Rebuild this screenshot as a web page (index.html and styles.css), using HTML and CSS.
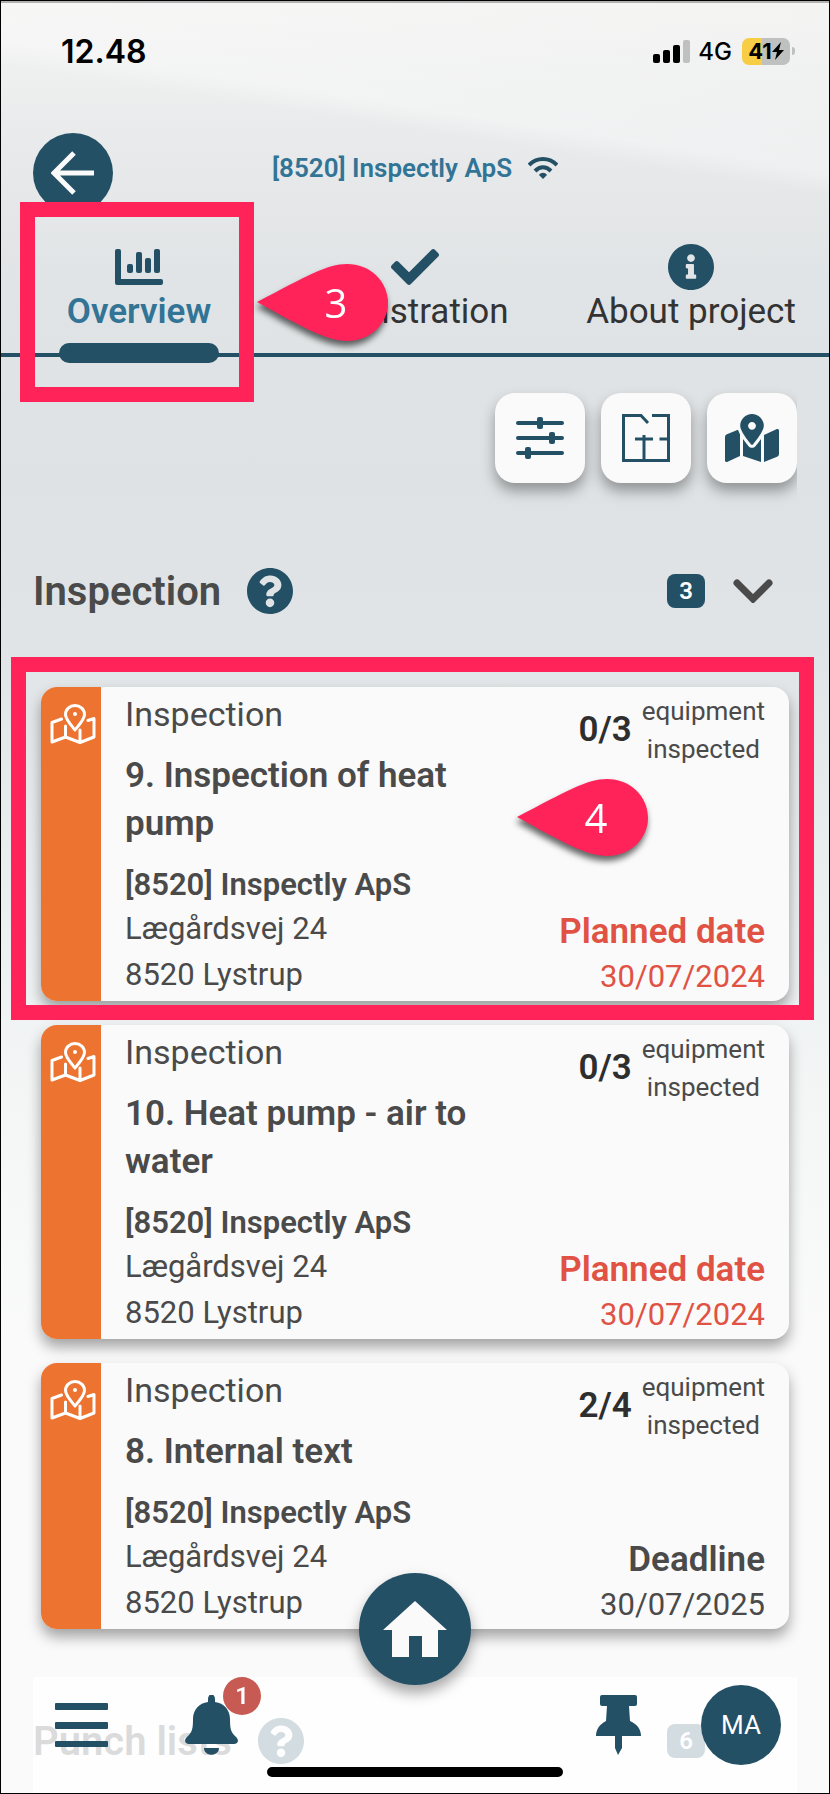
FILE: index.html
```
<!DOCTYPE html>
<html lang="en">
<head>
    <meta charset="UTF-8">
    <meta name="viewport" content="width=device-width, initial-scale=1.0">
    <title>Inspectly - Overview</title>
    <link rel="stylesheet" href="styles.css">
</head>
<body>
    <!-- Shared icons -->
    <svg class="sprite" width="0" height="0" aria-hidden="true">
        <symbol id="icon-help" viewBox="8 8 496 496">
            <path d="M504 256c0 136.997-111.043 248-248 248S8 392.997 8 256C8 119.083 119.043 8 256 8s248 111.083 248 248zM262.655 90c-54.497 0-89.255 22.957-116.549 63.758-3.536 5.286-2.353 12.415 2.715 16.258l34.699 26.31c5.205 3.947 12.621 3.008 16.665-2.122 17.864-22.658 30.113-35.797 57.303-35.797 20.429 0 45.698 13.148 45.698 32.958 0 14.976-12.363 22.667-32.534 33.976C247.128 238.528 216 254.941 216 296v4c0 6.627 5.373 12 12 12h56c6.627 0 12-5.373 12-12v-1.333c0-28.462 83.186-29.647 83.186-106.667 0-58.002-60.165-102-116.531-102zM256 338c-25.365 0-46 20.635-46 46 0 25.364 20.635 46 46 46s46-20.636 46-46c0-25.365-20.635-46-46-46z"/>
        </symbol>
        <symbol id="icon-map-outline" viewBox="0 0 46 40">
            <g fill="none" stroke="currentColor" stroke-width="3" stroke-linejoin="round" stroke-linecap="round">
                <path d="M25 26C20 20 15.500 15 15.500 10.500a9.500 9 0 0 1 19 0C34.500 15 30 20 25 26z"/>
                <path d="M11.500 15L2 18.500V38l13.500-5 14.500 5.500 14-5.500V14.500l-6 2M15.500 22v11M30 26v12"/>
            </g>
            <circle cx="25" cy="10" r="2" fill="currentColor"/>
        </symbol>
        <symbol id="icon-drop" viewBox="0 0 132 78">
            <path d="M0 38C50 12 70 0 90 0c23 0 41 17 41 39 0 21-18 38-41 38C70 77 45 63 0 38z"/>
        </symbol>
    </svg>

    <div class="status-bar">
        <span class="time">12.48</span>
        <div class="status-icons">
            <svg width="37" height="23" viewBox="0 0 37 23">
                <rect x="0" y="14" width="7" height="9" rx="2"/>
                <rect x="10" y="10" width="7" height="13" rx="2"/>
                <rect x="20" y="5" width="7" height="18" rx="2"/>
                <rect x="30" y="0" width="7" height="23" rx="2" fill="#bfc0c0"/>
            </svg>
            <span class="network">4G</span>
            <span class="battery">41<svg width="12" height="18" viewBox="0 0 12 18"><path d="M9 0L0 10h5L3 18l9-10H7z"/></svg></span>
        </div>
    </div>

    <header class="header">
        <button class="back-button" aria-label="Back">
            <svg width="44" height="44" viewBox="0 0 44 44" fill="none" stroke="#fafafa" stroke-width="5">
                <path d="M43 22H3M23 2L3 22l20 20"/>
            </svg>
        </button>
        <div class="project">
            <h1>[8520] Inspectly ApS</h1>
            <svg width="30" height="22" viewBox="0 0 30 22" fill="none" stroke="#245066" stroke-width="4">
                <path d="M1 8C9 0 21 0 29 8M7 14c5-5 11-5 16 0"/>
                <path d="M15 22l-4-4c2-3 6-3 8 0z" fill="#245066" stroke="none"/>
            </svg>
        </div>
    </header>

    <nav class="tabs">
        <button class="tab active">
            <svg width="48" height="36" viewBox="0 0 48 36">
                <path d="M0 2a2 2 0 0 1 2-2h2a2 2 0 0 1 2 2v28h40a2 2 0 0 1 2 2v2a2 2 0 0 1-2 2H2a2 2 0 0 1-2-2z"/>
                <rect x="12" y="15" width="6" height="9" rx="2"/>
                <rect x="21" y="3" width="6" height="21" rx="2"/>
                <rect x="30" y="9" width="6" height="15" rx="2"/>
                <rect x="39" y="0" width="6" height="24" rx="2"/>
            </svg>
            <span>Overview</span>
        </button>
        <button class="tab">
            <svg width="48" height="48" viewBox="0 0 512 512"><path d="M173.898 439.404l-166.400-166.400c-9.997-9.997-9.997-26.206 0-36.204l36.203-36.204c9.997-9.998 26.207-9.998 36.204 0L192 312.690 432.095 72.596c9.997-9.997 26.207-9.997 36.204 0l36.203 36.204c9.997 9.997 9.997 26.206 0 36.204l-294.400 294.401c-9.998 9.997-26.207 9.997-36.204-.001z"/></svg>
            <span>Registration</span>
        </button>
        <button class="tab">
            <svg width="46" height="46" viewBox="8 8 496 496"><path d="M256 8C119.043 8 8 119.083 8 256c0 136.997 111.043 248 248 248s248-111.003 248-248C504 119.083 392.957 8 256 8zm0 110c23.196 0 42 18.804 42 42s-18.804 42-42 42-42-18.804-42-42 18.804-42 42-42zm56 254c0 6.627-5.373 12-12 12h-88c-6.627 0-12-5.373-12-12v-24c0-6.627 5.373-12 12-12h12v-64h-12c-6.627 0-12-5.373-12-12v-24c0-6.627 5.373-12 12-12h64c6.627 0 12 5.373 12 12v100h12c6.627 0 12 5.373 12 12v24z"/></svg>
            <span>About project</span>
        </button>
        <div class="highlight highlight-tab"></div>
        <div class="callout callout-tab">
            <svg width="132" height="78"><use href="#icon-drop"/></svg>
            <span>3</span>
        </div>
    </nav>

    <main>
        <div class="toolbar">
            <button aria-label="Filter">
                <svg width="48" height="42" viewBox="0 0 48 42">
                    <rect x="0" y="4" width="48" height="4" rx="2"/>
                    <rect x="0" y="19" width="48" height="4" rx="2"/>
                    <rect x="0" y="34" width="48" height="4" rx="2"/>
                    <rect x="21" y="0" width="6" height="12" rx="2"/>
                    <rect x="33" y="15" width="6" height="12" rx="2"/>
                    <rect x="9" y="30" width="6" height="12" rx="2"/>
                </svg>
            </button>
            <button aria-label="Floor plan">
                <svg width="48" height="48" viewBox="0 0 48 48" fill="none" stroke="#245066" stroke-width="3">
                    <path d="M26 9l-7-7.500H1.500v45h45v-45H30M13 25h18M37.500 25H47M22 21v26"/>
                </svg>
            </button>
            <button aria-label="Map">
                <svg width="54" height="48" viewBox="0 0 576 512"><path d="M288 0c-69.590 0-126 56.410-126 126 0 56.260 82.350 158.800 113.900 196.020 6.390 7.540 17.820 7.540 24.200 0C331.650 284.800 414 182.260 414 126 414 56.410 357.590 0 288 0zm0 168c-23.200 0-42-18.800-42-42s18.800-42 42-42 42 18.800 42 42-18.800 42-42 42zM20.120 215.950A32.006 32.006 0 0 0 0 245.660v250.320c0 11.320 11.430 19.060 21.940 14.860L160 448V214.920c-8.840-15.980-16.070-31.540-21.250-46.420L20.120 215.950zM288 359.670c-14.070 0-27.380-6.180-36.510-16.960-19.660-23.200-40.570-49.620-59.490-76.720v182l192 64V266c-18.920 27.090-39.820 53.520-59.490 76.720-9.130 10.770-22.440 16.950-36.510 16.950zm266.060-198.510L416 224v288l139.880-55.950A31.996 31.996 0 0 0 576 426.340V176.020c0-11.320-11.430-19.060-21.940-14.860z"/></svg>
            </button>
        </div>

        <section>
            <div class="section-header">
                <h2>Inspection</h2>
                <button class="help" aria-label="Help"><svg width="46" height="46"><use href="#icon-help"/></svg></button>
                <span class="count">3</span>
                <button class="toggle" aria-label="Collapse">
                    <svg width="40" height="24" viewBox="0 0 40 24" fill="none" stroke="#4a4a4a" stroke-width="7" stroke-linecap="round"><path d="M4 4l16 16L36 4"/></svg>
                </button>
            </div>

            <div class="cards">
                <article class="card late">
                    <div class="card-type"><svg width="46" height="40"><use href="#icon-map-outline"/></svg></div>
                    <div class="card-info">
                        <p class="kind">Inspection</p>
                        <h3>9. Inspection of heat pump</h3>
                        <p class="company">[8520] Inspectly ApS</p>
                        <p class="address">Lægårdsvej 24<br>8520 Lystrup</p>
                    </div>
                    <div class="card-status">
                        <div class="progress"><strong>0/3</strong><span>equipment<br>inspected</span></div>
                        <div class="due"><strong>Planned date</strong><span>30/07/2024</span></div>
                    </div>
                    <div class="highlight highlight-card"></div>
                    <div class="callout callout-card">
                        <svg width="132" height="78"><use href="#icon-drop"/></svg>
                        <span>4</span>
                    </div>
                </article>

                <article class="card late">
                    <div class="card-type"><svg width="46" height="40"><use href="#icon-map-outline"/></svg></div>
                    <div class="card-info">
                        <p class="kind">Inspection</p>
                        <h3>10. Heat pump - air to water</h3>
                        <p class="company">[8520] Inspectly ApS</p>
                        <p class="address">Lægårdsvej 24<br>8520 Lystrup</p>
                    </div>
                    <div class="card-status">
                        <div class="progress"><strong>0/3</strong><span>equipment<br>inspected</span></div>
                        <div class="due"><strong>Planned date</strong><span>30/07/2024</span></div>
                    </div>
                </article>

                <article class="card">
                    <div class="card-type"><svg width="46" height="40"><use href="#icon-map-outline"/></svg></div>
                    <div class="card-info">
                        <p class="kind">Inspection</p>
                        <h3>8. Internal text</h3>
                        <p class="company">[8520] Inspectly ApS</p>
                        <p class="address">Lægårdsvej 24<br>8520 Lystrup</p>
                    </div>
                    <div class="card-status">
                        <div class="progress"><strong>2/4</strong><span>equipment<br>inspected</span></div>
                        <div class="due"><strong>Deadline</strong><span>30/07/2025</span></div>
                    </div>
                </article>
            </div>
        </section>

        <section>
            <div class="section-header">
                <h2>Punch lists</h2>
                <button class="help" aria-label="Help"><svg width="46" height="46"><use href="#icon-help"/></svg></button>
                <span class="count">6</span>
                <span class="toggle"></span>
            </div>
        </section>
    </main>

    <nav class="bottom-bar">
        <div class="bar-group left">
            <button aria-label="Menu">
                <svg width="54" height="44" viewBox="0 0 54 44">
                    <rect width="53" height="7" rx="1"/>
                    <rect y="19" width="53" height="7" rx="1"/>
                    <rect y="38" width="53" height="6" rx="1"/>
                </svg>
            </button>
            <button class="notifications" aria-label="Notifications">
                <svg width="54" height="60" viewBox="0 0 54 60">
                    <path d="M23 7V4a3 4 0 0 1 7 0v3c9 1 15 8 15 17 0 10 1 13 5 17 5 4 3 8-1 8H4c-4 0-6-4-1-8 4-4 5-7 5-17C8 15 14 8 23 7zM19 53h15c0 9-15 9-15 0z"/>
                </svg>
                <span class="alert">1</span>
            </button>
        </div>
        <button class="home" aria-label="Home">
            <svg width="64" height="56" viewBox="0 0 64 56"><path d="M32 0l32 29h-9v27H39V35H26v21H9V29H0z"/></svg>
        </button>
        <div class="bar-group right">
            <button aria-label="Pinned">
                <svg width="45" height="60" viewBox="0 0 45 60">
                    <path d="M6 0h33a2 2 0 0 1 2 2v7a2 2 0 0 1-2 2h-6l1 15c7 3 11 8 11 15H26v12l-4 7-3-7V41H0c0-7 4-12 10-15l1-15H6a2 2 0 0 1-2-2V2a2 2 0 0 1 2-2z"/>
                </svg>
            </button>
            <button class="avatar">MA</button>
        </div>
        <div class="home-indicator"></div>
    </nav>
</body>
</html>
```
FILE: styles.css
```
/* Global styles */
* {
    box-sizing: border-box;
}

body {
    margin: 0;
    min-height: 100vh;
    border: 1px solid #000;
    font-family: Roboto, sans-serif;
    color: #4a4a4a;
    background:
        linear-gradient(189deg, rgba(255, 255, 255, 0), rgba(255, 255, 255, 0.35) 44%, rgba(255, 255, 255, 0) 50%) 0 0 / 100% 260px no-repeat,
        linear-gradient(#f4f4f3 0, #e7e9ea 160px, #e1e4e6 280px, #dee2e4 480px, #e0e4e6 640px, #e9edee 850px, #f4f6f6 1100px, #fafafa 1340px);
}

h1, h2, h3, p {
    margin: 0;
}

button {
    padding: 0;
    border: none;
    background: none;
    font: inherit;
    color: inherit;
    cursor: pointer;
}

svg {
    display: block;
}

.sprite {
    position: absolute;
}

/* Phone status bar */
.status-bar {
    display: flex;
    justify-content: space-between;
    align-items: center;
    height: 98px;
    padding: 0 34px 0 60px;
    border-top: 2px solid #b3b0b1;
    font-family: Inter, sans-serif;
    color: #000;
}

.time {
    font-size: 32px;
    font-weight: 600;
}

.status-icons {
    display: flex;
    align-items: center;
    gap: 8px;
}

.network {
    font-size: 24px;
    font-weight: 500;
}

.battery {
    position: relative;
    display: flex;
    align-items: center;
    justify-content: center;
    width: 48px;
    height: 27px;
    margin: 0 5px 0 2px;
    border-radius: 7px;
    background: linear-gradient(90deg, #f7cd45 20px, #bfc0c0 20px);
    font-size: 22px;
    font-weight: 700;
}

.battery::after {
    content: "";
    position: absolute;
    right: -5px;
    width: 3px;
    height: 8px;
    border-radius: 0 3px 3px 0;
    background: #bfc0c0;
}

/* Header */
.header {
    display: grid;
    grid-template-columns: 80px 1fr 80px;
    padding: 34px 32px 0;
}

.back-button {
    display: flex;
    align-items: center;
    justify-content: center;
    height: 80px;
    border-radius: 50%;
    background: #245066;
}

.project {
    display: flex;
    align-items: center;
    justify-content: center;
    gap: 16px;
    height: 70px;
}

.project h1 {
    font-size: 26px;
    font-weight: 600;
    color: #327495;
}

/* Tabs */
.tabs {
    position: relative;
    display: grid;
    grid-template-columns: repeat(3, 1fr);
    border-bottom: 4px solid #245066;
}

.tab {
    display: flex;
    flex-direction: column;
    align-items: center;
    padding: 30px 0 20px;
    font-size: 35px;
    line-height: 42px;
    color: #333;
}

.tab svg {
    height: 48px;
    fill: #245066;
}

.tab span {
    position: relative;
    min-width: 160px;
    white-space: nowrap;
}

.tab.active {
    font-weight: 600;
    color: #327495;
}

.tab.active span::after {
    content: "";
    position: absolute;
    right: 0;
    bottom: -30px;
    left: 0;
    height: 20px;
    border-radius: 10px;
    background: #245066;
}

/* Guide marks */
.highlight {
    position: absolute;
    border: 15px solid #ff235a;
    pointer-events: none;
}

.highlight-tab {
    top: -11px;
    left: 19px;
    width: 234px;
    height: 200px;
}

.highlight-card {
    inset: -30px -25px -19px -30px;
}

.callout {
    position: absolute;
    width: 132px;
    height: 78px;
    fill: #ff235a;
    color: #fff;
    font-family: "Open Sans", sans-serif;
    font-size: 40px;
    line-height: 78px;
    text-align: center;
    filter: drop-shadow(-1px 5px 3px rgba(0, 0, 0, 0.6));
}

.callout svg {
    position: absolute;
}

.callout span {
    position: relative;
    padding-left: 26px;
}

.callout-tab {
    top: 51px;
    left: 256px;
}

.callout-card {
    top: 92px;
    left: 476px;
}

/* Toolbar */
main {
    padding: 0 32px 22px;
}

.toolbar {
    display: flex;
    justify-content: flex-end;
    gap: 16px;
    padding: 36px 0 24px;
    overflow: hidden;
}

.toolbar button {
    display: flex;
    align-items: center;
    justify-content: center;
    width: 90px;
    height: 90px;
    border-radius: 20px;
    background: #fafafa;
    fill: #245066;
    box-shadow: 0 8px 14px rgba(0, 0, 0, 0.35);
}

/* Sections */
.section-header {
    display: flex;
    align-items: center;
    height: 60px;
    margin-top: 54px;
    padding-right: 24px;
}

.section-header h2 {
    font-size: 40px;
    font-weight: 600;
}

.help {
    margin-left: 26px;
    fill: #245066;
}

.count {
    width: 38px;
    height: 34px;
    margin-left: auto;
    border-radius: 8px;
    background: #245066;
    font-size: 24px;
    font-weight: 600;
    line-height: 34px;
    text-align: center;
    color: #fff;
}

.toggle {
    width: 40px;
    margin-left: 28px;
}

/* Cards */
.cards {
    display: flex;
    flex-direction: column;
    gap: 24px;
    margin-bottom: 82px;
    padding: 66px 8px 0;
}

.card {
    position: relative;
    display: grid;
    grid-template-columns: 60px 1fr 240px;
    border-radius: 16px;
    background: #fafafa;
    box-shadow: 0 8px 14px rgba(0, 0, 0, 0.35);
}

.card-type {
    padding: 17px 0 0 9px;
    border-radius: 16px 0 0 16px;
    background: #ed7430;
    color: #fff;
}

.card-info {
    padding: 5px 0 3px 24px;
}

.kind {
    font-size: 34px;
    line-height: 44px;
}

.card h3 {
    margin: 16px 0;
    padding-right: 24px;
    font-size: 35px;
    font-weight: 600;
    line-height: 48px;
}

.company {
    font-size: 31px;
    font-weight: 600;
    line-height: 42px;
}

.address {
    font-size: 31px;
    line-height: 46px;
}

.card-status {
    display: flex;
    flex-direction: column;
    justify-content: space-between;
    align-items: flex-end;
    padding: 5px 24px 4px 0;
}

.progress {
    display: flex;
    align-items: center;
    gap: 10px;
    font-size: 26px;
    line-height: 38px;
    text-align: center;
}

.progress strong {
    font-size: 35px;
    font-weight: 600;
    color: #2e2e2e;
}

.due {
    display: flex;
    flex-direction: column;
    font-size: 31px;
    line-height: 40px;
    text-align: right;
}

.due strong {
    font-size: 35px;
    font-weight: 600;
    line-height: 50px;
}

.late .due {
    color: #e05243;
}

/* Bottom bar */
.bottom-bar {
    position: fixed;
    right: 33px;
    bottom: 1px;
    left: 33px;
    display: grid;
    grid-template-columns: 1fr 112px 1fr;
    height: 116px;
    padding: 8px 16px 0;
    background: rgba(255, 255, 255, 0.8);
    fill: #245066;
}

.bar-group {
    display: flex;
    align-items: center;
    height: 80px;
}

.bar-group.left {
    gap: 76px;
    padding-left: 6px;
}

.bar-group.right {
    justify-content: flex-end;
    gap: 60px;
}

.notifications {
    position: relative;
}

.alert {
    position: absolute;
    top: -18px;
    right: -22px;
    width: 38px;
    height: 38px;
    border-radius: 50%;
    background: #c85a54;
    font-size: 24px;
    font-weight: 600;
    line-height: 38px;
    text-align: center;
    color: #fff;
}

.home {
    display: flex;
    align-items: center;
    justify-content: center;
    height: 112px;
    margin-top: -112px;
    border-radius: 50%;
    background: #245066;
    fill: #fafafa;
    box-shadow: 0 8px 14px rgba(0, 0, 0, 0.35);
}

.avatar {
    width: 80px;
    height: 80px;
    border-radius: 50%;
    background: #245066;
    font-size: 26px;
    color: #fff;
}

.home-indicator {
    position: absolute;
    bottom: 16px;
    left: 50%;
    width: 296px;
    height: 10px;
    margin-left: -148px;
    border-radius: 5px;
    background: #000;
}
```
